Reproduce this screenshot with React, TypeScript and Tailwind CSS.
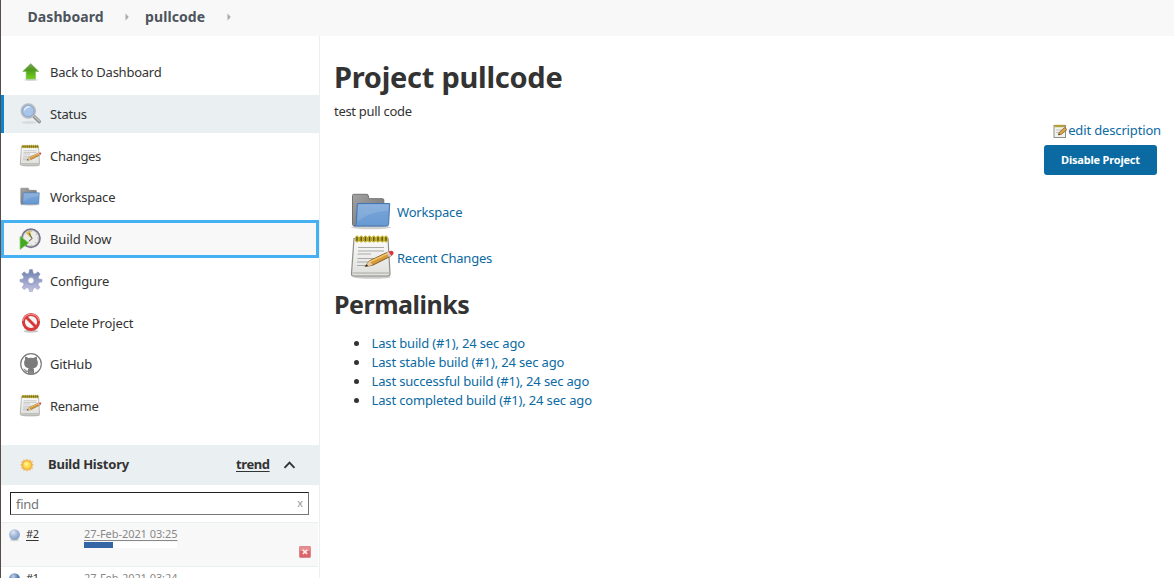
import type { ReactNode } from "react";

function ArrowUp() {
  return (
    <svg width="24" height="24" viewBox="0 0 24 24">
      <defs>
        <linearGradient id="arrow" x1="0" y1="0" x2="0" y2="1">
          <stop offset="0" stopColor="#7f9f5a" />
          <stop offset="0.4" stopColor="#4f9a1c" />
          <stop offset="1" stopColor="#73d216" />
        </linearGradient>
      </defs>
      <ellipse cx="12" cy="19.8" rx="7" ry="1.2" fill="#000" opacity="0.15" />
      <path d="M11.8 3.6 L19.8 11.5 H16.4 V19 H7.2 V11.5 H3.8 Z" fill="url(#arrow)" stroke="#7fb862" strokeWidth="0.7" />
    </svg>
  );
}

function Magnifier() {
  return (
    <svg width="24" height="24" viewBox="0 0 24 24">
      <ellipse cx="10" cy="20.5" rx="7.5" ry="1.4" fill="#000" opacity="0.08" />
      <path d="M15 14.5 L20.2 19.5" stroke="#929292" strokeWidth="3.6" strokeLinecap="round" />
      <path d="M15.6 14.6 L20.4 19.1" stroke="#c9c9c9" strokeWidth="1.3" strokeLinecap="round" />
      <circle cx="9.3" cy="9" r="6.8" fill="#a9c6ea" stroke="#b9bcc0" strokeWidth="2" />
      <circle cx="9.3" cy="9" r="5.7" fill="none" stroke="#7d9fd0" strokeWidth="0.8" />
      <path d="M4.7 9.7 A5 5 0 0 1 11.8 4.6 Q7.3 6.2 4.7 9.7" fill="#e2ecf8" />
    </svg>
  );
}

function Notepad({ size }: { size: number }) {
  return (
    <svg width={size} height={size} viewBox="0 0 48 48" className="shrink-0">
      <defs>
        <linearGradient id="paper" x1="0" y1="0" x2="0" y2="1">
          <stop offset="0" stopColor="#fbfbfb" />
          <stop offset="1" stopColor="#dededb" />
        </linearGradient>
      </defs>
      <ellipse cx="23" cy="43" rx="19" ry="1.8" fill="#000" opacity="0.2" />
      <path d="M5 4.5 H39 L41 39.5 Q41.1 42 38.5 42 H4.5 Q2.3 42 2.5 39.5 Z" fill="url(#paper)" stroke="#8d8d89" strokeWidth="1.2" />
      <path d="M3.5 39 H40" stroke="#aaa9a4" strokeWidth="1.2" />
      <path d="M9 13.5 H35 M9 17 H35 M8.5 20 H22 M8.5 24.5 H30 M8 28 H26 M8 31.5 H19" stroke="#aaa" strokeWidth="1.1" />
      <path d="M6.5 5.2 H38" stroke="#918420" strokeWidth="4" />
      {[8, 12.2, 16.4, 20.6, 24.8, 29, 33.2, 37].map((x) => (
        <ellipse key={x} cx={x} cy="5" rx="1.4" ry="3" fill="#5e5514" stroke="#c9b733" strokeWidth="1.2" />
      ))}
      <path d="M16 32.5 L20.5 26.8 L39 18 L41.5 22.3 L23.5 31.3 Z" fill="#d69a38" stroke="#76511d" strokeWidth="0.9" />
      <path d="M21 27.7 L39.3 19.2" stroke="#f2c56e" strokeWidth="1.5" />
      <path d="M16 32.5 L20.5 26.8 L23.5 31.3 Z" fill="#e8caa0" />
      <path d="M16 32.5 L17.8 30.2 L19 32 Z" fill="#222" />
      <path d="M37.5 18.7 L39.8 17.6 L42.5 21.8 L40 23 Z" fill="#cfcfcf" />
      <path d="M39.5 17.8 Q42.3 16 44 17.4 Q45.8 19.6 42.4 21.9 Z" fill="#dc3838" />
    </svg>
  );
}

function SmallNotepad() {
  return (
    <svg width="15" height="15" viewBox="0 0 15 15" className="shrink-0">
      <rect x="1" y="1.5" width="11.5" height="12" fill="#f2f2ee" stroke="#8f8f8a" />
      <path d="M1.5 2 H12" stroke="#b59f3c" strokeWidth="2.4" />
      <path d="M3 6 H9 M3 8.5 H6" stroke="#b5b5b0" strokeWidth="0.8" />
      <path d="M5.3 10.9 L6.5 8.1 L11.5 3.6 L14 5.6 L8.5 10.2 Z" fill="#d9a64a" stroke="#7c5820" strokeWidth="0.7" />
      <path d="M5.3 10.9 L5.8 9.5 L7 10.5 Z" fill="#332712" />
    </svg>
  );
}

function Folder({ size }: { size: number }) {
  return (
    <svg width={size} height={size} viewBox="0 0 48 48" className="shrink-0">
      <defs>
        <linearGradient id="folderBack" x1="0" y1="0" x2="1" y2="1">
          <stop offset="0" stopColor="#a3a3a3" />
          <stop offset="1" stopColor="#6f6f6f" />
        </linearGradient>
        <linearGradient id="folderFront" x1="0" y1="0" x2="0" y2="1">
          <stop offset="0" stopColor="#7ca7d8" />
          <stop offset="1" stopColor="#6799d2" />
        </linearGradient>
      </defs>
      <ellipse cx="22" cy="39.3" rx="20" ry="2" fill="#000" opacity="0.18" />
      <path d="M3.5 7.5 Q3.5 6.3 4.7 6.3 H18 Q19 6.3 19.2 7.5 L19.9 10.7 H33.5 Q34.8 10.7 34.8 12 V37.8 H5 Q3.5 37.8 3.5 36.3 Z" fill="url(#folderBack)" stroke="#727272" strokeWidth="1" />
      <path d="M8.3 15.5 H40.7 L39.6 36.3 Q39.5 38 37.9 38 H5.3 Q7.1 37.3 7.2 35.8 Z" fill="url(#folderFront)" stroke="#4776b2" strokeWidth="1" />
      <path d="M9.3 16.5 H39.7 L39.3 22.5 Q22.5 23 8.3 33.5 Z" fill="#fff" opacity="0.13" />
    </svg>
  );
}

function BuildClock() {
  return (
    <svg width="24" height="24" viewBox="0 0 24 24">
      <circle cx="11.9" cy="11.2" r="9" fill="#ecece6" stroke="#77768b" strokeWidth="1.9" />
      <circle cx="11.9" cy="11.2" r="7.9" fill="none" stroke="#bdbdc9" strokeWidth="0.7" />
      <path d="M12.4 11.5 L6.8 5.9 Q8.9 3.7 11.4 3.6 Z" fill="#d8bd49" />
      <path d="M10.1 6.2 L13.2 11.5 L9.8 14.3" fill="none" stroke="#555" strokeWidth="1" />
      <path d="M12.2 3.8 V4.8 M17.6 7.2 L16.8 7.7 M19 11.2 H18.2 M16.8 15.7 L16.1 15.1 M12.2 18.7 V17.7" stroke="#999" strokeWidth="0.8" />
      <path d="M1.2 9.6 L9.5 15.9 L1.2 22.2 Z" fill="#42a81e" stroke="#67bd47" strokeWidth="0.8" />
    </svg>
  );
}

function Gear() {
  return (
    <svg width="24" height="24" viewBox="0 0 24 24">
      <defs>
        <linearGradient id="gear" x1="0" y1="0" x2="0" y2="1">
          <stop offset="0" stopColor="#6d82ae" />
          <stop offset="1" stopColor="#c5c3e2" />
        </linearGradient>
      </defs>
      <path
        d="M10.6 0.5 H13.4 L14.2 4.2 L16 5 L19 2.8 L21.2 5 L19.2 8 L19.9 9.9 L23 10.4 V12.8 L19.9 13.6 L19 15.6 L21 18.6 L18.8 20.6 L16 18.6 L14.2 19.4 L13.4 22.5 H10.6 L9.8 19.4 L8 18.6 L5.2 20.6 L3 18.6 L5 15.6 L4.1 13.6 L1 12.8 V10.4 L4.1 9.9 L4.8 8 L2.8 5 L5 2.8 L8 5 L9.8 4.2 Z"
        fill="url(#gear)"
        stroke="#8d95b5"
        strokeWidth="0.5"
      />
      <circle cx="12" cy="11.6" r="4.6" fill="#8f9ac3" opacity="0.5" />
      <circle cx="12" cy="11.6" r="3" fill="#fff" stroke="#a5a9cb" strokeWidth="0.8" />
    </svg>
  );
}

function Forbidden() {
  return (
    <svg width="24" height="24" viewBox="0 0 24 24">
      <ellipse cx="12" cy="20.3" rx="7.5" ry="1.4" fill="#000" opacity="0.22" />
      <circle cx="12" cy="11" r="7.6" fill="#f6f6f6" stroke="#d83a3a" strokeWidth="3" />
      <path d="M6.8 5.8 L17.2 16.2" stroke="#d83a3a" strokeWidth="3" />
      <path d="M3.8 10.1 A8.3 8.3 0 0 1 20.2 10.1" fill="none" stroke="#ee9090" strokeWidth="1.2" />
    </svg>
  );
}

function Octocat() {
  return (
    <svg width="24" height="24" viewBox="0 0 24 24">
      <circle cx="12" cy="12" r="10.3" fill="#fff" stroke="#7c7c7c" strokeWidth="1.2" />
      <path
        d="M6.2 4.8 Q7.8 4.9 9.4 6 Q12 5.4 14.6 6 Q16.2 4.9 17.8 4.8 Q18.4 6.4 17.9 7.8 Q19.1 9.2 18.9 11.3 Q18.6 15.7 14.3 16.2 Q15.1 17 15.1 18.4 V22 Q12 23.2 8.9 22 V19.8 Q6.4 20.3 5.5 18.3 Q5 17.3 4.2 16.8 Q5.7 16.4 6.7 18 Q7.5 19 8.9 18.5 Q9 17 9.7 16.2 Q5.4 15.7 5.1 11.3 Q4.9 9.2 6.1 7.8 Q5.6 6.4 6.2 4.8 Z"
        fill="#7c7c7c"
      />
      <path d="M11 19 V22.5 M13 19 V22.5" stroke="#a6a6a6" strokeWidth="0.6" />
    </svg>
  );
}

function Sun() {
  return (
    <svg width="16" height="16" viewBox="0 0 16 16">
      <path
        d="M8 1.4 L9.4 3.4 L11.4 2.3 L12 4.3 L14.2 4.6 L13 6.6 L14.9 8 L13 9.4 L14.2 11.4 L12 11.7 L11.4 13.9 L9.4 12.8 L8 14.7 L6.6 12.8 L4.6 13.9 L4 11.7 L1.8 11.4 L3 9.4 L1.1 8 L3 6.6 L1.8 4.6 L4 4.3 L4.6 2.3 L6.6 3.4 Z"
        fill="#f3b866"
      />
      <circle cx="8" cy="8" r="4.2" fill="#fbe04c" stroke="#f2a83d" strokeWidth="0.9" />
      <circle cx="7.2" cy="7" r="2" fill="#fff08a" />
    </svg>
  );
}

function Ball({ id, dark }: { id: string; dark?: boolean }) {
  return (
    <svg width="13" height="14" viewBox="0 0 12 14" className="shrink-0">
      <defs>
        <radialGradient id={id} cx="0.38" cy="0.3" r="0.75">
          <stop offset="0" stopColor={dark ? "#c3d5ea" : "#dce7f3"} />
          <stop offset="0.5" stopColor={dark ? "#6488b9" : "#a3b9d8"} />
          <stop offset="1" stopColor={dark ? "#2f568f" : "#7f9ac3"} />
        </radialGradient>
      </defs>
      <ellipse cx="6" cy="12" rx="4.5" ry="1.2" fill="#000" opacity="0.14" />
      <circle cx="6" cy="6.6" r="5.4" fill={`url(#${id})`} />
    </svg>
  );
}

function StopIcon() {
  return (
    <svg width="12" height="12" viewBox="0 0 12 12">
      <rect x="0.5" y="0.5" width="11" height="11" rx="0.8" fill="#dd6468" stroke="#d9888a" />
      <rect x="1" y="1" width="10" height="4" fill="#e98d90" />
      <path d="M3.8 3.8 L8.2 8 M8.2 3.8 L3.8 8" stroke="#fff" strokeWidth="1.6" opacity="0.9" />
    </svg>
  );
}

function Caret() {
  return (
    <svg width="5" height="8" viewBox="0 0 5 8">
      <path d="M0.5 0.5 L3.8 4 L0.5 7.5 Z" fill="#aaa" />
    </svg>
  );
}

type Task = { label: string; icon: ReactNode; look: string; text: string };

const plain = "border-[3px] border-transparent";
const tasks: Task[] = [
  { label: "Back to Dashboard", icon: <ArrowUp />, look: plain, text: "pt-px tracking-[-0.24px]" },
  { label: "Status", icon: <Magnifier />, look: "border-l-[3px] border-[#0b85d0] bg-[#eaeff2]", text: "pt-px tracking-[-0.2px]" },
  { label: "Changes", icon: <Notepad size={24} />, look: plain, text: "pt-[2px] tracking-[-0.3px]" },
  { label: "Workspace", icon: <Folder size={24} />, look: plain, text: "pt-px tracking-[-0.2px]" },
  { label: "Build Now", icon: <BuildClock />, look: "border-[3px] border-[#45b1f3] bg-[#f8f8f8]", text: "pt-px tracking-[-0.1px]" },
  { label: "Configure", icon: <Gear />, look: plain, text: "pt-px tracking-[-0.15px]" },
  { label: "Delete Project", icon: <Forbidden />, look: plain, text: "pt-[2px] tracking-[-0.15px]" },
  { label: "GitHub", icon: <Octocat />, look: plain, text: "pt-px tracking-[-0.2px]" },
  { label: "Rename", icon: <Notepad size={24} />, look: plain, text: "pt-px tracking-[-0.3px]" },
];

const permalinks = [
  "Last build (#1), 24 sec ago",
  "Last stable build (#1), 24 sec ago",
  "Last successful build (#1), 24 sec ago",
  "Last completed build (#1), 24 sec ago",
];

function Sidebar() {
  return (
    <aside className="flex w-[319px] shrink-0 flex-col border-r border-[#eaeff2] pt-[17px]">
      <nav className="flex flex-col gap-[3.75px]">
        {tasks.map((t) => (
          <a key={t.label} className={`flex h-[38px] w-[318px] items-center pl-[15px] nth-2:w-[319px] ${t.look}`}>
            {t.icon}
            <span className={`pl-[7px] text-[13px] text-[#333] ${t.text}`}>{t.label}</span>
          </a>
        ))}
      </nav>
      <div className="mt-[20px] flex h-10 shrink-0 items-center bg-[#eaeff2] pl-[18px] text-[13px] font-bold text-[#333]">
        <Sun />
        <span className="w-[201px] shrink-0 pb-px pl-[13px] tracking-[-0.22px]">Build History</span>
        <span className="pb-px tracking-[-0.4px] underline underline-offset-2">trend</span>
        <svg className="ml-[13px]" width="13" height="10" viewBox="0 0 13 10">
          <path d="M1.5 7.8 L6.5 2.6 L11.5 7.8" fill="none" stroke="#333" strokeWidth="1.9" />
        </svg>
      </div>
      <div className="mt-[7px] ml-[9px] flex h-[23px] w-[299px] shrink-0 items-center justify-between border border-[#767676] border-t-[#222] border-l-[#222] pr-[5px] pl-[5px]">
        <span className="pt-0.5 text-[13px] tracking-[-0.3px] text-[#757575]">find</span>
        <span className="text-[11px] text-[#999]">x</span>
      </div>
      <div className="mt-[7px] flex h-[44px] w-[317px] shrink-0 border-t border-[#eaeff2] bg-[#f8f8f8] pl-[7px]">
        <div className="pt-[5px]"><Ball id="ballRunning" /></div>
        <span className="w-[63px] pt-[3px] pl-[5px] text-[11px] leading-[16px] tracking-[-0.4px] text-[#333] underline underline-offset-2">#2</span>
        <div className="w-[215px] pt-[3px] text-[11px] leading-[16px] tracking-[-0.06px] text-[#888]">
          <span className="underline underline-offset-2">27-Feb-2021 03:25</span>
          <div className="h-[6px] w-[93px] bg-white"><div className="h-full w-[29px] bg-[#3465a4]" /></div>
        </div>
        <div className="pt-[22.5px]"><StopIcon /></div>
      </div>
      <div className="flex h-[44px] w-[317px] shrink-0 border-t border-[#eaeff2] bg-white pl-[7px]">
        <div className="pt-[5px]"><Ball id="ballDone" dark /></div>
        <span className="w-[63px] pt-[3px] pl-[5px] text-[11px] leading-[16px] tracking-[-0.4px] text-[#333] underline underline-offset-2">#1</span>
        <span className="pt-[3px] text-[11px] leading-[16px] tracking-[-0.06px] text-[#888] underline underline-offset-2">27-Feb-2021 03:24</span>
      </div>
    </aside>
  );
}

function Main() {
  return (
    <main className="flex flex-1 flex-col pt-[21px] pr-[13px] pl-[14px] text-[#333]">
      <h1 className="text-[29px] leading-[40px] font-bold tracking-[-0.27px]">Project pullcode</h1>
      <p className="mt-[5px] text-[13px] leading-[18px] tracking-[-0.3px]">test pull code</p>
      <div className="mt-px flex flex-col items-end">
        <a className="flex h-[18px] items-center text-[13px] leading-[18px] tracking-[-0.15px] text-[#0b6aa2]">
          <span className="pt-[3px]"><SmallNotepad /></span>
          edit description
        </a>
        <button className="mt-[6px] mr-[4px] h-[30px] w-[113px] rounded-[3px] bg-[#0b6aa2] text-[11px] font-bold tracking-[-0.2px] text-white">Disable Project</button>
      </div>
      <div className="mt-[14px] flex flex-col pl-[15px] text-[13px] text-[#0b6aa2]">
        <a className="flex h-[46px] items-center"><Folder size={48} /><span className="pt-[2px] tracking-[-0.2px]">Workspace</span></a>
        <a className="flex h-[46px] items-center"><Notepad size={48} /><span className="pt-[2px] tracking-[-0.23px]">Recent Changes</span></a>
      </div>
      <h2 className="mt-[5px] text-[25px] leading-[36px] font-bold tracking-[-0.5px]">Permalinks</h2>
      <ul className="mt-[12px] flex flex-col pl-[20px] text-[13px] leading-[19px]">
        {permalinks.map((p) => (
          <li key={p} className="flex items-center">
            <span className="mr-[12.5px] size-[5px] rounded-full bg-[#333]" />
            <a className="tracking-[-0.15px] text-[#0b6aa2]">{p}</a>
          </li>
        ))}
      </ul>
    </main>
  );
}

export default function App() {
  return (
    <div className="flex h-[578px] w-[1174px] flex-col overflow-hidden border-l border-[#594c48] bg-white font-['Noto_Sans','Open_Sans',sans-serif]">
      <header className="flex h-[36px] shrink-0 items-center bg-[#f8f8f8] pb-[3px] pl-[26.5px] text-[14px] font-bold text-[#4d545d]">
        <span className="w-[97.5px] tracking-[0.08px]">Dashboard</span>
        <Caret />
        <span className="w-[97px] pl-[15px] tracking-[0.1px]">pullcode</span>
        <Caret />
      </header>
      <div className="flex min-h-0 flex-1">
        <Sidebar />
        <Main />
      </div>
    </div>
  );
}
